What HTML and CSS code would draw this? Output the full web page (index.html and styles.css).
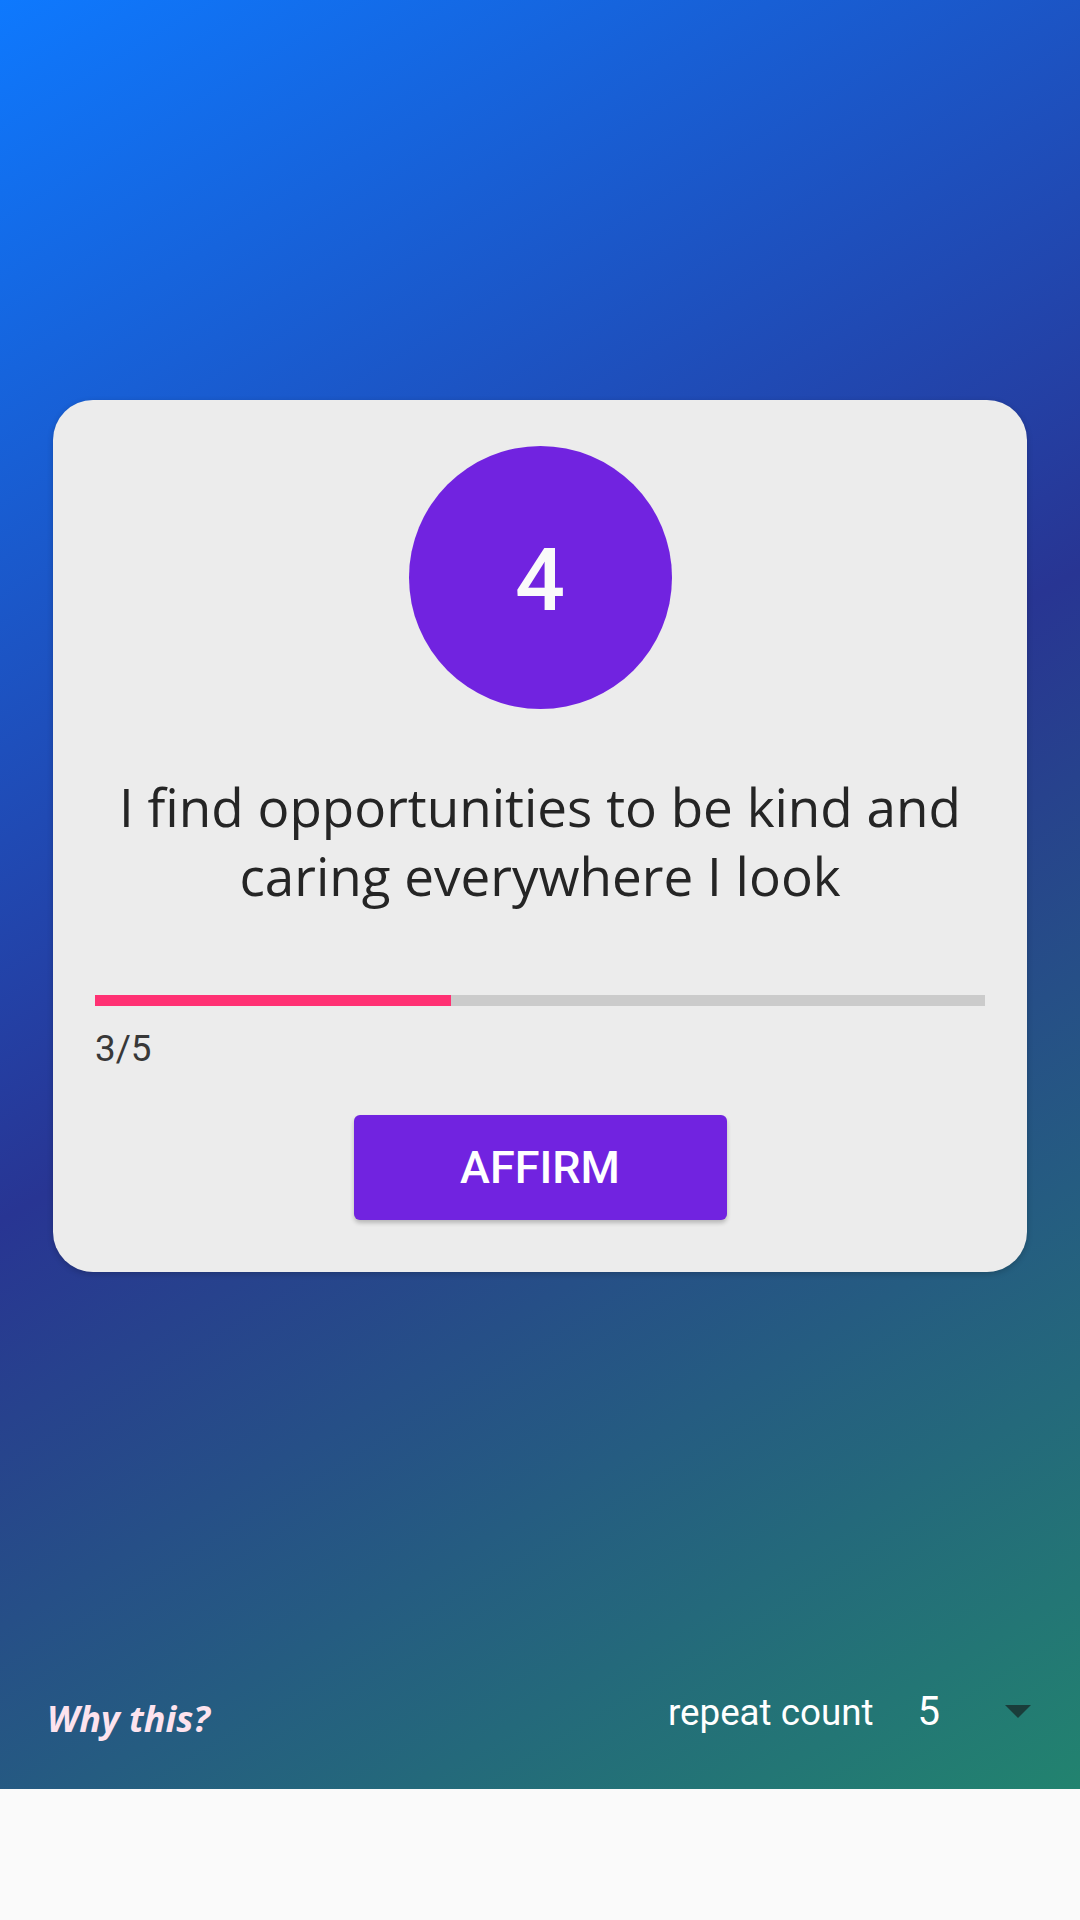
FILE: index.html
```html
<!DOCTYPE html>
<html lang="en">
<head>
<meta charset="utf-8">
<title>Affirmation</title>
<link rel="stylesheet" href="styles.css">
</head>
<body>
  <div class="screen">
    <div class="card">
      <div class="badge">4</div>
      <p class="quote">I find opportunities to be kind and caring everywhere I look</p>
      <div class="progress"><div class="progress-fill" style="width: 40%"></div></div>
      <div class="count">3/5</div>
      <button class="affirm">AFFIRM</button>
    </div>
    <div class="footer">
      <span class="why">Why this?</span>
      <div class="repeat">
        <span class="repeat-label">repeat count</span>
        <span class="repeat-value">5</span>
        <svg class="arrow" width="26" height="13" viewBox="0 0 26 13"><path d="M0 0 L26 0 L13 13 Z" fill="#1a3d3a"/></svg>
      </div>
    </div>
  </div>
  <div class="bottom"></div>
</body>
</html>
```
FILE: styles.css
```css
html, body {
  margin: 0;
  padding: 0;
}
body {
  width: 1080px;
  height: 1920px;
  background: #fafafa;
  font-family: Roboto, "Liberation Sans", sans-serif;
}
.screen {
  height: 1789px;
  display: flex;
  flex-direction: column;
  background: linear-gradient(148.9deg, #0e79fe 0%, #283593 50%, #22836f 100%);
}
.card {
  margin: 400px 53px 0;
  height: 872px;
  box-sizing: border-box;
  background: #ececec;
  border-radius: 40px;
  padding: 46px 42px 0;
  display: flex;
  flex-direction: column;
  box-shadow: 0 2px 6px rgba(0, 0, 0, 0.2);
}
.badge {
  width: 263px;
  height: 263px;
  border-radius: 50%;
  background: #7123e0;
  color: #fafafa;
  align-self: center;
  display: flex;
  align-items: center;
  justify-content: center;
  font-family: Roboto, sans-serif;
  font-weight: 500;
  font-size: 88px;
  line-height: 1;
  padding-top: 4px;
  box-sizing: border-box;
}
.quote {
  margin: 63px 0 0;
  font-family: "Open Sans", sans-serif;
  font-size: 53px;
  line-height: 69px;
  color: #252525;
  text-align: center;
}
.progress {
  margin-top: 85px;
  height: 10.5px;
  background: #cbcbcb;
}
.progress-fill {
  height: 100%;
  background: #ff3173;
}
.count {
  margin-top: 21px;
  font-size: 36.75px;
  line-height: 43px;
  color: #383838;
}
.affirm {
  margin-top: 45px;
  align-self: center;
  width: 373px;
  height: 105px;
  border: none;
  border-radius: 6px;
  background: #7123e0;
  color: #ffffff;
  font-family: Roboto, sans-serif;
  font-weight: 500;
  font-size: 45px;
  box-shadow: 0 3px 4px rgba(0, 0, 0, 0.22);
  padding: 0;
}
.footer {
  margin-top: auto;
  height: 60px;
  padding: 0 49px 41px 47px;
  display: flex;
  justify-content: space-between;
  align-items: flex-start;
}
.why {
  margin-top: 7px;
  font-family: "Noto Sans", sans-serif;
  font-style: italic;
  font-weight: 700;
  font-size: 36px;
  line-height: 48px;
  color: #fde3ee;
}
.repeat {
  display: flex;
  align-items: flex-start;
}
.repeat-label {
  margin-top: 3px;
  font-size: 36.75px;
  line-height: 43px;
  color: #ffffff;
}
.repeat-value {
  margin-left: 44px;
  font-size: 40px;
  line-height: 47px;
  color: #ffffff;
}
.arrow {
  margin-left: 65px;
  margin-top: 17px;
  display: block;
}
.bottom {
  height: 131px;
  background: #fafafa;
}
```
